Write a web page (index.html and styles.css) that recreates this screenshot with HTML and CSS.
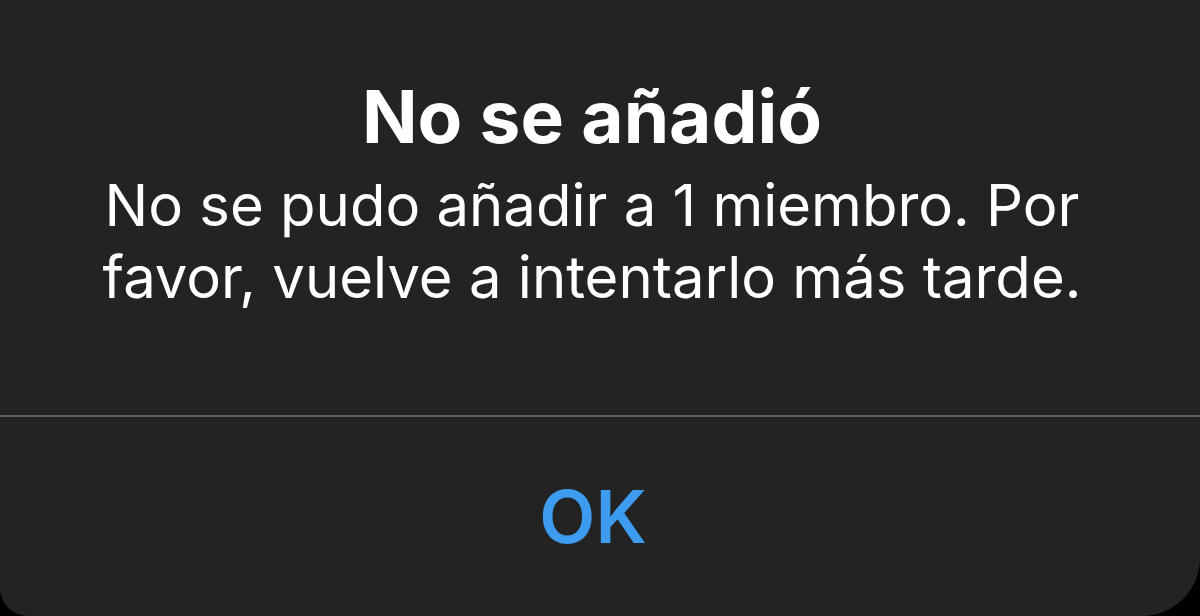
FILE: index.html
```html
<!DOCTYPE html>
<html lang="es">
  <head>
    <meta charset="UTF-8" />
    <meta name="viewport" content="width=device-width, initial-scale=1.0" />
    <title>No se añadió</title>
    <link rel="stylesheet" href="styles.css">
  </head>
  <body>
    <div class="alert">
      <div class="alert-content">
        <h1 class="alert-title">No se añadió</h1>
        <p class="alert-message">
          No se pudo añadir a 1 miembro. Por<br />
          favor, vuelve a intentarlo más tarde.
        </p>
      </div>
      <div class="alert-actions">
        <button class="alert-button">OK</button>
      </div>
    </div>
  </body>
</html>
```

FILE: styles.css
```css
body {
  margin: 0;
  padding: 0;
  background-color: #000;
  font-family: Inter, "Liberation Sans", Arial, sans-serif;
  height: 100vh;
  overflow: hidden;
}

.alert {
  display: flex;
  flex-direction: column;
  height: 616px;
  background-color: #232323;
  border-radius: 0 0 58px 28px;
  color: #fff;
  text-align: center;
}

.alert-content {
  box-sizing: border-box;
  height: 417px;
  padding: 77px 16px 0 0;
  border-bottom: 2px solid #5c5c5c;
}

.alert-title {
  margin: 0;
  font-size: 73px;
  font-weight: 700;
  line-height: 80px;
}

.alert-message {
  margin: 12px 0 0;
  font-size: 58px;
  font-weight: 400;
  line-height: 72px;
}

.alert-actions {
  flex: 1;
  display: flex;
  justify-content: center;
  align-items: center;
  padding-right: 14px;
}

.alert-button {
  background: none;
  border: none;
  padding: 0;
  color: #3d9cf0;
  font-family: inherit;
  font-size: 73px;
  font-weight: 600;
  cursor: pointer;
}
```
